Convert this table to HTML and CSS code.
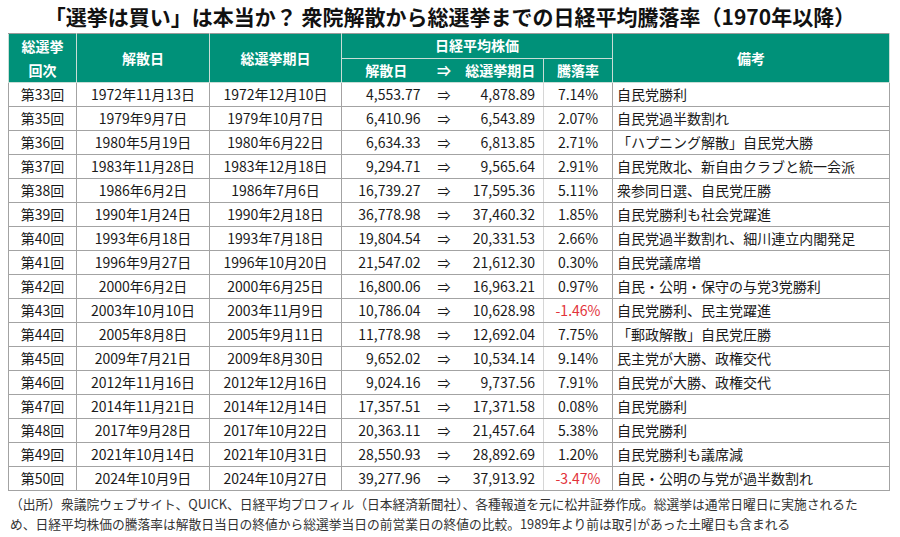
FILE: index.html
```html
<!DOCTYPE html>
<html lang="ja">
<head>
<meta charset="utf-8">
<title>「選挙は買い」は本当か？</title>
<link rel="stylesheet" href="styles.css">
</head>
<body>
<h1 class="title">「選挙は買い」は本当か？ 衆院解散から総選挙までの日経平均騰落率（1970年以降）</h1>
<table class="tbl">
  <colgroup>
    <col class="c-no"><col class="c-d1"><col class="c-d2"><col class="c-p1"><col class="c-ar"><col class="c-p2"><col class="c-rt"><col class="c-nt">
  </colgroup>
  <thead>
    <tr>
      <th rowspan="2" class="h-two">総選挙<br>回次</th>
      <th rowspan="2">解散日</th>
      <th rowspan="2">総選挙期日</th>
      <th colspan="4">日経平均株価</th>
      <th rowspan="2">備考</th>
    </tr>
    <tr>
      <th class="h-p1">解散日</th>
      <th class="h-ar">⇒</th>
      <th class="h-p2">総選挙期日</th>
      <th class="h-rt">騰落率</th>
    </tr>
  </thead>
  <tbody>
    <tr><td>第33回</td><td>1972年11月13日</td><td>1972年12月10日</td><td class="p1">4,553.77</td><td class="ar">⇒</td><td class="p2">4,878.89</td><td class="rt">7.14%</td><td class="nt">自民党勝利</td></tr>
    <tr><td>第35回</td><td>1979年9月7日</td><td>1979年10月7日</td><td class="p1">6,410.96</td><td class="ar">⇒</td><td class="p2">6,543.89</td><td class="rt">2.07%</td><td class="nt">自民党過半数割れ</td></tr>
    <tr><td>第36回</td><td>1980年5月19日</td><td>1980年6月22日</td><td class="p1">6,634.33</td><td class="ar">⇒</td><td class="p2">6,813.85</td><td class="rt">2.71%</td><td class="nt">「ハプニング解散」自民党大勝</td></tr>
    <tr><td>第37回</td><td>1983年11月28日</td><td>1983年12月18日</td><td class="p1">9,294.71</td><td class="ar">⇒</td><td class="p2">9,565.64</td><td class="rt">2.91%</td><td class="nt">自民党敗北、新自由クラブと統一会派</td></tr>
    <tr><td>第38回</td><td>1986年6月2日</td><td>1986年7月6日</td><td class="p1">16,739.27</td><td class="ar">⇒</td><td class="p2">17,595.36</td><td class="rt">5.11%</td><td class="nt">衆参同日選、自民党圧勝</td></tr>
    <tr><td>第39回</td><td>1990年1月24日</td><td>1990年2月18日</td><td class="p1">36,778.98</td><td class="ar">⇒</td><td class="p2">37,460.32</td><td class="rt">1.85%</td><td class="nt">自民党勝利も社会党躍進</td></tr>
    <tr><td>第40回</td><td>1993年6月18日</td><td>1993年7月18日</td><td class="p1">19,804.54</td><td class="ar">⇒</td><td class="p2">20,331.53</td><td class="rt">2.66%</td><td class="nt">自民党過半数割れ、細川連立内閣発足</td></tr>
    <tr><td>第41回</td><td>1996年9月27日</td><td>1996年10月20日</td><td class="p1">21,547.02</td><td class="ar">⇒</td><td class="p2">21,612.30</td><td class="rt">0.30%</td><td class="nt">自民党議席増</td></tr>
    <tr><td>第42回</td><td>2000年6月2日</td><td>2000年6月25日</td><td class="p1">16,800.06</td><td class="ar">⇒</td><td class="p2">16,963.21</td><td class="rt">0.97%</td><td class="nt">自民・公明・保守の与党3党勝利</td></tr>
    <tr><td>第43回</td><td>2003年10月10日</td><td>2003年11月9日</td><td class="p1">10,786.04</td><td class="ar">⇒</td><td class="p2">10,628.98</td><td class="rt neg">-1.46%</td><td class="nt">自民党勝利、民主党躍進</td></tr>
    <tr><td>第44回</td><td>2005年8月8日</td><td>2005年9月11日</td><td class="p1">11,778.98</td><td class="ar">⇒</td><td class="p2">12,692.04</td><td class="rt">7.75%</td><td class="nt">「郵政解散」自民党圧勝</td></tr>
    <tr><td>第45回</td><td>2009年7月21日</td><td>2009年8月30日</td><td class="p1">9,652.02</td><td class="ar">⇒</td><td class="p2">10,534.14</td><td class="rt">9.14%</td><td class="nt">民主党が大勝、政権交代</td></tr>
    <tr><td>第46回</td><td>2012年11月16日</td><td>2012年12月16日</td><td class="p1">9,024.16</td><td class="ar">⇒</td><td class="p2">9,737.56</td><td class="rt">7.91%</td><td class="nt">自民党が大勝、政権交代</td></tr>
    <tr><td>第47回</td><td>2014年11月21日</td><td>2014年12月14日</td><td class="p1">17,357.51</td><td class="ar">⇒</td><td class="p2">17,371.58</td><td class="rt">0.08%</td><td class="nt">自民党勝利</td></tr>
    <tr><td>第48回</td><td>2017年9月28日</td><td>2017年10月22日</td><td class="p1">20,363.11</td><td class="ar">⇒</td><td class="p2">21,457.64</td><td class="rt">5.38%</td><td class="nt">自民党勝利</td></tr>
    <tr><td>第49回</td><td>2021年10月14日</td><td>2021年10月31日</td><td class="p1">28,550.93</td><td class="ar">⇒</td><td class="p2">28,892.69</td><td class="rt">1.20%</td><td class="nt">自民党勝利も議席減</td></tr>
    <tr><td>第50回</td><td>2024年10月9日</td><td>2024年10月27日</td><td class="p1">39,277.96</td><td class="ar">⇒</td><td class="p2">37,913.92</td><td class="rt neg">-3.47%</td><td class="nt">自民・公明の与党が過半数割れ</td></tr>
  </tbody>
</table>
<p class="note">（出所）衆議院ウェブサイト、QUICK、日経平均プロフィル（日本経済新聞社）、各種報道を元に松井証券作成。総選挙は通常日曜日に実施されるた<br>め、日経平均株価の騰落率は解散日当日の終値から総選挙当日の前営業日の終値の比較。1989年より前は取引があった土曜日も含まれる</p>
</body>
</html>
```

FILE: styles.css
```css
html, body {
  margin: 0;
  padding: 0;
  background: #ffffff;
}

body {
  width: 900px;
  height: 537px;
  overflow: hidden;
  font-family: "Noto Sans CJK JP", "Noto Sans", sans-serif;
  color: #1a1a1a;
}

.title {
  margin: 0;
  height: 33px;
  line-height: 33px;
  font-size: 21px;
  font-weight: 700;
  text-align: center;
  color: #111111;
  white-space: nowrap;
}

.tbl {
  margin-left: 8px;
  width: 881px;
  border-collapse: collapse;
  table-layout: fixed;
  font-size: 14px;
}

.c-no { width: 68px; }
.c-d1 { width: 133px; }
.c-d2 { width: 132px; }
.c-p1 { width: 89px; }
.c-ar { width: 27px; }
.c-p2 { width: 86px; }
.c-rt { width: 69px; }
.c-nt { width: 277px; }

.tbl th {
  background: #009179;
  color: #ffffff;
  font-weight: 700;
  height: 23px;
  padding: 0;
  line-height: 23px;
  text-align: center;
  border: 1px solid #c9ddd6;
  white-space: nowrap;
}

.tbl thead tr:first-child th {
  border-top-color: #9a9a9a;
}

.tbl th.h-two {
  line-height: 24px;
}

.tbl th.h-p1 { border-right: none; }
.tbl th.h-ar { border-left: none; border-right: none; }
.tbl th.h-p2 { border-left: none; }

.tbl td {
  height: 23px;
  padding: 0;
  line-height: 23px;
  text-align: center;
  border: 1px solid #a3a3a3;
  white-space: nowrap;
}

.tbl td.p1 {
  text-align: right;
  padding-right: 10px;
  border-right: none;
}

.tbl td.ar {
  border-left: none;
  border-right: none;
  font-size: 13px;
}

.tbl td.p2 {
  text-align: right;
  padding-right: 8px;
  border-left: none;
  border-right-color: #d6d6d6;
}

.tbl td.rt {
  border-left-color: #d6d6d6;
}

.tbl td.neg {
  color: #e2323a;
}

.tbl td.nt {
  text-align: left;
  padding-left: 4px;
}

.note {
  margin: 3px 0 0 10px;
  font-size: 12.75px;
  line-height: 20px;
  color: #333333;
  white-space: nowrap;
}
```
